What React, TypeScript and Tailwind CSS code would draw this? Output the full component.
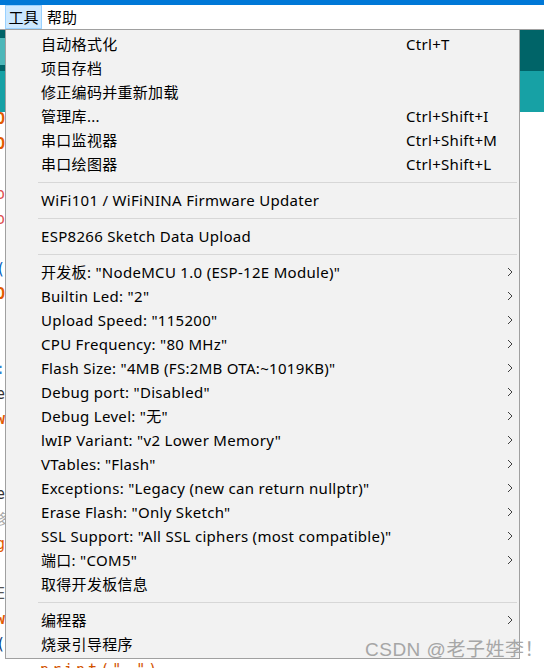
import React from 'react';

type Item =
  | { kind: 'sep' }
  | { kind: 'item'; label: string; shortcut?: string; sub?: boolean };

const items: Item[] = [
  { kind: 'item', label: '自动格式化', shortcut: 'Ctrl+T' },
  { kind: 'item', label: '项目存档' },
  { kind: 'item', label: '修正编码并重新加载' },
  { kind: 'item', label: '管理库...', shortcut: 'Ctrl+Shift+I' },
  { kind: 'item', label: '串口监视器', shortcut: 'Ctrl+Shift+M' },
  { kind: 'item', label: '串口绘图器', shortcut: 'Ctrl+Shift+L' },
  { kind: 'sep' },
  { kind: 'item', label: 'WiFi101 / WiFiNINA Firmware Updater' },
  { kind: 'sep' },
  { kind: 'item', label: 'ESP8266 Sketch Data Upload' },
  { kind: 'sep' },
  { kind: 'item', label: '开发板: "NodeMCU 1.0 (ESP-12E Module)"', sub: true },
  { kind: 'item', label: 'Builtin Led: "2"', sub: true },
  { kind: 'item', label: 'Upload Speed: "115200"', sub: true },
  { kind: 'item', label: 'CPU Frequency: "80 MHz"', sub: true },
  { kind: 'item', label: 'Flash Size: "4MB (FS:2MB OTA:~1019KB)"', sub: true },
  { kind: 'item', label: 'Debug port: "Disabled"', sub: true },
  { kind: 'item', label: 'Debug Level: "无"', sub: true },
  { kind: 'item', label: 'lwIP Variant: "v2 Lower Memory"', sub: true },
  { kind: 'item', label: 'VTables: "Flash"', sub: true },
  { kind: 'item', label: 'Exceptions: "Legacy (new can return nullptr)"', sub: true },
  { kind: 'item', label: 'Erase Flash: "Only Sketch"', sub: true },
  { kind: 'item', label: 'SSL Support: "All SSL ciphers (most compatible)"', sub: true },
  { kind: 'item', label: '端口: "COM5"', sub: true },
  { kind: 'item', label: '取得开发板信息' },
  { kind: 'sep' },
  { kind: 'item', label: '编程器', sub: true },
  { kind: 'item', label: '烧录引导程序' },
];

// the last character of each editor line, peeking out left of the menu
const codeEdge: [string, string][] = [
  ['O', 'text-[#e25a00] font-bold'],
  ['O', 'text-[#e25a00] font-bold'],
  ['', ''],
  ['o', 'text-[#e05050]'],
  ['o', 'text-[#e05050]'],
  ['', ''],
  ['(', 'text-[#0060c0]'],
  ['O', 'text-[#e25a00] font-bold'],
  ['', ''],
  ['', ''],
  [':', 'text-[#3080d0]'],
  ['e', 'text-[#333]'],
  ['w', 'text-[#e25a00] font-bold'],
  ['', ''],
  ['', ''],
  ['e', 'text-[#333]'],
  ['多', 'text-[#aaa]'],
  ['g', 'text-[#e25a00]'],
  ['', ''],
  ['E', 'text-[#555]'],
  ['w', 'text-[#e25a00] font-bold'],
  ['(', 'text-[#004080]'],
];

function Chevron() {
  return (
    <svg width="6" height="10" viewBox="0 0 6 10" className="block">
      <polyline points="1,1 5,5 1,9" fill="none" stroke="#404040" strokeWidth="1" />
    </svg>
  );
}

export default function App() {
  const font = { fontFamily: '"Noto Sans", "Noto Sans CJK SC", sans-serif' };
  return (
    <div className="relative w-[544px] h-[668px] overflow-hidden bg-white text-black" style={font}>
      <div className="h-[5px] bg-[#0078d7]" />
      <div className="h-[25px] flex items-stretch border-b border-[#a0a0a0] bg-white text-[15px]">
        <div className="ml-[5px] w-[37px] flex items-center justify-center bg-[#cce8ff] border border-[#99d1ff]">
          工具
        </div>
        <div className="ml-[5px] flex items-center">帮助</div>
      </div>

      {/* editor behind the menu */}
      <div className="flex flex-col">
        <div className="h-[41px] bg-[#006468] flex">
          <div className="mt-[8px] w-[5px] h-[27px] bg-[#4db7b9]" />
        </div>
        <div className="h-[41px] bg-[#17a1a5]" />
        <div className="-mt-[5px] flex flex-col text-[15px]" style={{ fontFamily: '"DejaVu Sans Mono", monospace' }}>
          {codeEdge.map(([c, cls], i) => (
            <div key={i} className={`h-[25px] leading-[25px] -ml-[4px] ${cls}`}>
              {c}
            </div>
          ))}
        </div>
      </div>
      <div className="absolute left-[40px] top-[659px] text-[15px] text-[#d35400] tracking-[3px]" style={{ fontFamily: '"DejaVu Sans Mono", monospace' }}>
        print(".")
      </div>

      {/* tools menu */}
      <div className="absolute left-[5px] top-[29px] w-[515px] border border-[#a0a0a0] bg-[#f2f2f2] py-[2px] text-[15px] tracking-[0.3px]">
        {items.map((it, i) =>
          it.kind === 'sep' ? (
            <div key={i} className="h-[12px] flex items-center pl-[32px] pr-[2px]">
              <div className="h-px w-full bg-[#d7d7d7]" />
            </div>
          ) : (
            <div key={i} className="h-[24px] flex items-center">
              <span className="w-[400px] pl-[35px] whitespace-nowrap">{it.label}</span>
              <span className="flex-1 whitespace-nowrap">{it.shortcut}</span>
              <span className="w-[16px] pl-[4px]">{it.sub && <Chevron />}</span>
            </div>
          )
        )}
      </div>

      <div className="absolute left-[365px] top-[636px] text-[19px] text-[#a6a6a6] tracking-[0.5px]" style={{ fontFamily: '"Liberation Sans", "Noto Sans CJK SC", sans-serif' }}>
        CSDN @老子姓李！
      </div>
    </div>
  );
}
